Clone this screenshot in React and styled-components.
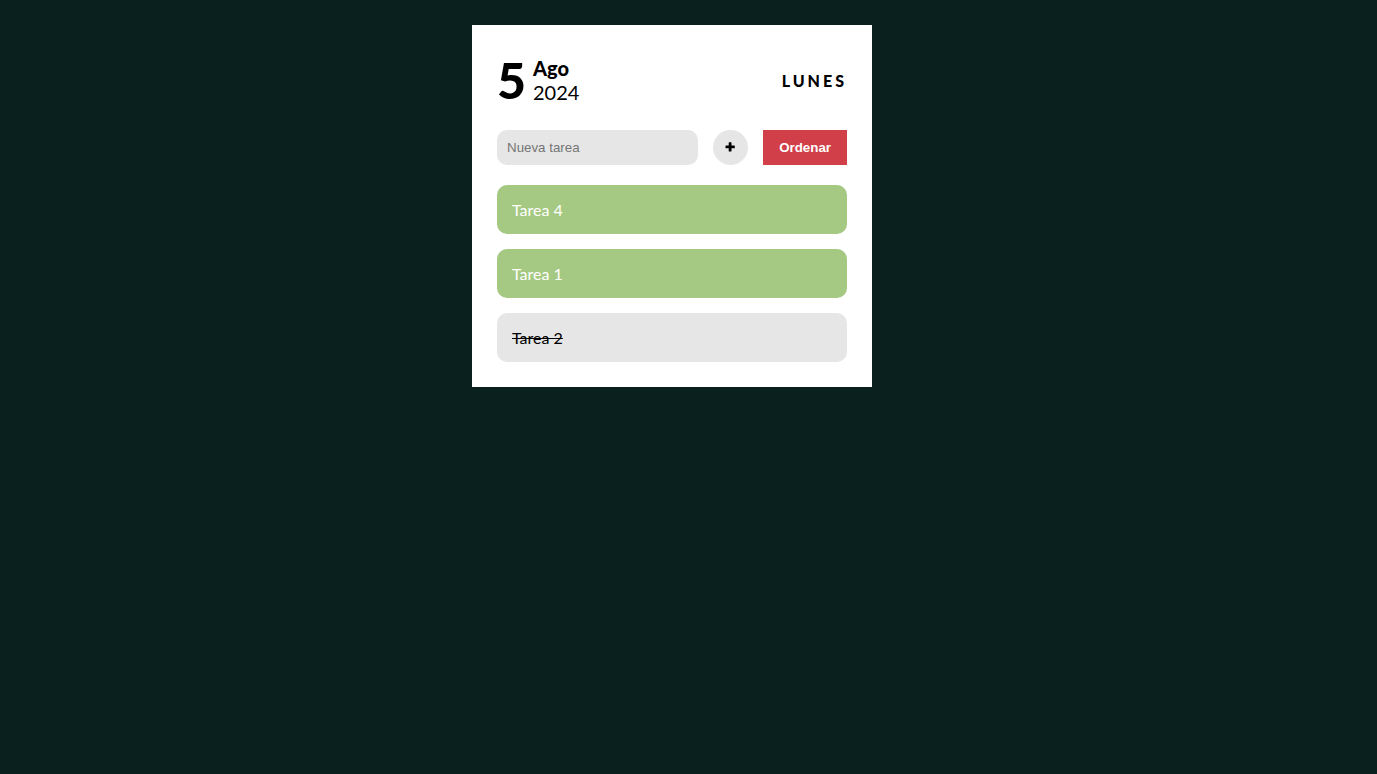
import React, { useState } from "react";
import styled, { createGlobalStyle } from "styled-components";

const GlobalStyle = createGlobalStyle`
  * { box-sizing: border-box; }
  body {
    margin: 0;
    background: #0a201e;
    color: #000;
    font-family: Lato, sans-serif;
    font-size: 16px;
  }
`;

const Page = styled.div`
  min-height: 100vh;
  display: flex;
  justify-content: center;
  align-items: flex-start;
  padding: 25px 33px 25px 0;
`;

const Card = styled.main`
  width: 100%;
  max-width: 400px;
  padding: 25px;
  background: #fff;
`;

const Header = styled.header`
  display: flex;
  justify-content: space-between;
  align-items: center;
  height: 60px;
  margin-bottom: 20px;
`;

const DateBlock = styled.div`
  display: flex;
  align-items: center;
  gap: 7px;
`;

const DayNumber = styled.span`
  font-size: 50px;
  font-weight: 900;
  line-height: 60px;
`;

const MonthYear = styled.div`
  display: flex;
  flex-direction: column;
  font-size: 20px;
  line-height: 24px;
`;

const Month = styled.span`
  font-weight: 900;
`;

const Year = styled.span`
  font-weight: 400;
`;

const DayName = styled.span`
  font-weight: 900;
  letter-spacing: 3px;
  text-transform: uppercase;
`;

const Form = styled.form`
  display: flex;
  gap: 15px;
  margin-bottom: 20px;
`;

const TaskInput = styled.input`
  flex: 1;
  min-width: 0;
  height: 35px;
  padding: 0 10px;
  border: none;
  border-radius: 10px;
  background: #e6e6e6;
  font-family: "Liberation Sans", Arial, sans-serif;
  &::placeholder { color: #757575; }
`;

const AddButton = styled.button`
  display: flex;
  align-items: center;
  justify-content: center;
  width: 35px;
  height: 35px;
  padding: 0;
  border: none;
  border-radius: 50%;
  background: #e6e6e6;
  color: #000;
  cursor: pointer;
`;

const SortButton = styled.button`
  height: 35px;
  padding: 0 16px;
  border: none;
  background: #d13f49;
  color: #fff;
  font-family: "Liberation Sans", Arial, sans-serif;
  font-weight: 700;
  cursor: pointer;
`;

const TaskList = styled.ul`
  display: flex;
  flex-direction: column;
  gap: 15px;
  margin: 0;
  padding: 0;
  list-style: none;
`;

const Task = styled.li`
  padding: 15px;
  border-radius: 10px;
  line-height: 19px;
  cursor: pointer;
  background: ${(p) => (p.$done ? "#e6e6e6" : "#a5c982")};
  color: ${(p) => (p.$done ? "#000" : "#fff")};
  text-decoration: ${(p) => (p.$done ? "line-through" : "none")};
`;

const PlusIcon = () => (
  <svg width="11" height="11" viewBox="0 0 11 11" aria-hidden="true">
    <path
      d="M4.2 .3h1.8a.5.5 0 0 1 .5.5v2.7h2.8a.5.5 0 0 1 .5.5v1.7a.5.5 0 0 1-.5.5H6.5v2.7a.5.5 0 0 1-.5.5H4.2a.5.5 0 0 1-.5-.5V6.2H1a.5.5 0 0 1-.5-.5V4a.5.5 0 0 1 .5-.5h2.7V.8a.5.5 0 0 1 .5-.5z"
      fill="currentColor"
    />
  </svg>
);

const initialTasks = [
  { id: 4, text: "Tarea 4", done: false },
  { id: 1, text: "Tarea 1", done: false },
  { id: 2, text: "Tarea 2", done: true },
];

export default function App() {
  const [tasks, setTasks] = useState(initialTasks);
  const [text, setText] = useState("");

  const addTask = (e) => {
    e.preventDefault();
    if (!text.trim()) return;
    setTasks([{ id: Date.now(), text, done: false }, ...tasks]);
    setText("");
  };

  const toggle = (id) =>
    setTasks(tasks.map((t) => (t.id === id ? { ...t, done: !t.done } : t)));

  const sortTasks = () =>
    setTasks([...tasks].sort((a, b) => Number(a.done) - Number(b.done)));

  return (
    <>
      <GlobalStyle />
      <Page>
        <Card>
          <Header>
            <DateBlock>
              <DayNumber>5</DayNumber>
              <MonthYear>
                <Month>Ago</Month>
                <Year>2024</Year>
              </MonthYear>
            </DateBlock>
            <DayName>Lunes</DayName>
          </Header>
          <Form onSubmit={addTask}>
            <TaskInput
              type="text"
              aria-label="Nueva tarea"
              placeholder="Nueva tarea"
              value={text}
              onChange={(e) => setText(e.target.value)}
            />
            <AddButton type="submit" aria-label="Agregar tarea">
              <PlusIcon />
            </AddButton>
            <SortButton type="button" onClick={sortTasks}>Ordenar</SortButton>
          </Form>
          <TaskList>
            {tasks.map((t) => (
              <Task key={t.id} $done={t.done} onClick={() => toggle(t.id)}>
                {t.text}
              </Task>
            ))}
          </TaskList>
        </Card>
      </Page>
    </>
  );
}
